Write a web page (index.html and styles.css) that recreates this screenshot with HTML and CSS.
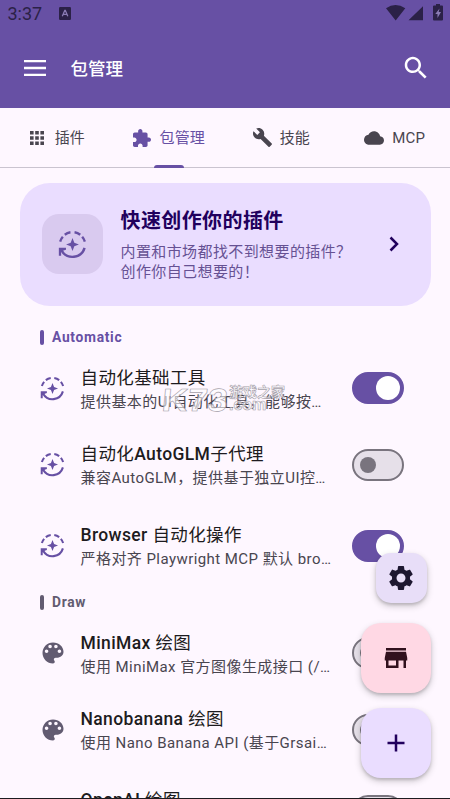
FILE: index.html
```html
<!DOCTYPE html>
<html lang="zh-CN">
<head>
<meta charset="utf-8">
<title>包管理</title>
<link rel="stylesheet" href="styles.css">
</head>
<body>
<svg class="defs" width="0" height="0">
  <symbol id="auto" viewBox="0 0 24 24">
    <g fill="none" stroke="currentColor" stroke-width="2">
      <path d="M1.800 9.600A10.300 10.300 0 0 1 4 5.600M5.600 3.900A10.300 10.300 0 0 1 10.300 1.900M13.700 1.900A10.300 10.300 0 0 1 18.400 3.900M20 5.600A10.300 10.300 0 0 1 22.200 9.600"/>
      <path d="M22 14.800A10.400 10.400 0 0 1 3 17"/>
    </g>
    <path fill="currentColor" d="M.7 14.600H6.600V16.400L4.600 17 2.600 18.500V21.300H.7zM12 6.700l1.500 3.800 3.800 1.500-3.800 1.500-1.500 3.800-1.500-3.800-3.800-1.500 3.800-1.500z"/>
  </symbol>
  <symbol id="palette" viewBox="0 0 24 24"><path fill="currentColor" d="M12 3c-4.970 0-9 4.030-9 9s4.030 9 9 9c.83 0 1.500-.67 1.500-1.500 0-.39-.15-.74-.39-1.010-.23-.26-.38-.61-.38-.99 0-.83.67-1.500 1.500-1.500H16c2.760 0 5-2.240 5-5 0-4.420-4.030-8-9-8zm-5.500 9c-.83 0-1.500-.67-1.500-1.500S5.670 9 6.500 9 8 9.670 8 10.500 7.330 12 6.500 12zm3-4C8.670 8 8 7.330 8 6.500S8.670 5 9.500 5s1.500.67 1.500 1.500S10.330 8 9.500 8zm5 0c-.83 0-1.500-.67-1.500-1.500S13.670 5 14.500 5s1.500.67 1.500 1.500S15.330 8 14.500 8zm3 4c-.83 0-1.500-.67-1.500-1.500S16.670 9 17.500 9s1.500.67 1.500 1.500-.67 1.500-1.500 1.500z"/></symbol>
</svg>
<div class="screen">
  <header class="top">
    <div class="status">
      <span class="clock">3:37</span>
      <svg class="badge" viewBox="0 0 12 13"><rect width="12" height="13" rx="1.200" fill="#2b2147"/><path d="M3.300 9.200 5.800 3.300h.5l2.500 5.900M4.300 7.300h3.500" fill="none" stroke="#8a7bb4" stroke-width="1.300"/></svg>
      <svg class="sys" viewBox="0 0 60 18" fill="#2b2147"><path d="M0 4.300Q9.500-2.200 19.300 4.300L9.700 16.500zM22.500 16.300 37 2.300V16.300zM48 1.500h2V0h4v1.500h2q1 0 1 1V15.500q0 1-1 1H48q-1 0-1-1V2.500q0-1 1-1z"/><path fill="#8a7bb4" d="M53.500 4.500 49.300 10h2.200v4l3.500-6h-2.300z"/></svg>
    </div>
    <div class="bar">
      <svg class="menu" viewBox="0 0 22 16"><path d="M0 1.200h22M0 8h22M0 14.800h22" stroke="#fff" stroke-width="2.300"/></svg>
      <h1>包管理</h1>
      <svg class="search" viewBox="0 0 24 24"><path fill="#fff" d="M15.500 14h-.79l-.28-.27C15.410 12.590 16 11.110 16 9.500 16 5.910 13.090 3 9.500 3S3 5.910 3 9.500 5.910 16 9.500 16c1.610 0 3.090-.59 4.230-1.570l.27.28v.79l5 4.990L20.490 19l-4.990-5zm-6 0C7.010 14 5 11.990 5 9.500S7.010 5 9.500 5 14 7.010 14 9.500 11.990 14 9.500 14z"/></svg>
    </div>
  </header>
  <nav class="tabs">
    <div class="tab t1"><svg viewBox="0 0 14 14"><path d="M0 0h3.600v3.600H0zM5.200 0h3.600v3.600H5.200zM10.400 0H14v3.600h-3.600zM0 5.200h3.600v3.600H0zM5.200 5.200h3.600v3.600H5.200zM10.400 5.200H14v3.600h-3.600zM0 10.400h3.600V14H0zM5.200 10.400h3.600V14H5.200zM10.400 10.400H14V14h-3.600z"/></svg><span>插件</span></div>
    <div class="tab t2"><svg viewBox="2 1 21 21"><path d="M20.500 11H19V7c0-1.100-.9-2-2-2h-4V3.500C13 2.120 11.880 1 10.500 1S8 2.120 8 3.500V5H4c-1.100 0-1.990.9-1.990 2v3.800H3.500c1.490 0 2.700 1.210 2.700 2.700s-1.210 2.700-2.700 2.700H2V20c0 1.100.9 2 2 2h3.800v-1.500c0-1.490 1.210-2.700 2.700-2.700 1.490 0 2.700 1.210 2.700 2.700V22H17c1.100 0 2-.9 2-2v-4h1.500c1.380 0 2.500-1.120 2.500-2.500S21.880 11 20.500 11z"/></svg><span>包管理</span></div>
    <div class="tab t3"><svg viewBox="1 1 22 22"><path d="M22.700 19l-9.100-9.100c.9-2.300.4-5-1.500-6.900-2-2-5-2.400-7.400-1.300L9 6 6 9 1.600 4.700C.4 7.100.9 10.100 2.900 12.100c1.900 1.900 4.600 2.400 6.900 1.500l9.100 9.100c.4.4 1 .4 1.400 0l2.300-2.300c.5-.4.5-1.100.1-1.400z"/></svg><span>技能</span></div>
    <div class="tab t4"><svg viewBox="0 4 24 16"><path d="M19.350 10.040C18.670 6.590 15.640 4 12 4 9.110 4 6.600 5.640 5.350 8.040 2.340 8.360 0 10.910 0 14c0 3.310 2.690 6 6 6h13c2.760 0 5-2.240 5-5 0-2.640-2.050-4.780-4.650-4.960z"/></svg><span>MCP</span></div>
  </nav>
  <main>
    <section class="promo">
      <div class="tile"><svg><use href="#auto"/></svg></div>
      <div class="copy"><h2>快速创作你的插件</h2><p>内置和市场都找不到想要的插件？<br>创作你自己想要的！</p></div>
      <svg class="chev" viewBox="0 0 10 16"><path d="M1.500 1.500 8 8l-6.500 6.500" fill="none" stroke="#21005d" stroke-width="2.500"/></svg>
    </section>
    <h3 class="group">Automatic</h3>
    <article class="row">
      <svg class="ico"><use href="#auto"/></svg>
      <div class="txt"><h4>自动化基础工具</h4><p>提供基本的UI自动化工具，能够按…</p></div>
      <i class="switch on"></i>
      <div class="mark"><b>K73</b><div><span>游戏之家</span><em>.com</em></div></div>
    </article>
    <article class="row">
      <svg class="ico"><use href="#auto"/></svg>
      <div class="txt"><h4>自动化<b>AutoGLM</b>子代理</h4><p>兼容AutoGLM，提供基于独立UI控…</p></div>
      <i class="switch"></i>
    </article>
    <article class="row tall">
      <svg class="ico"><use href="#auto"/></svg>
      <div class="txt"><h4><b>Browser</b> 自动化操作</h4><p>严格对齐 Playwright MCP 默认 bro…</p></div>
      <i class="switch on"></i>
    </article>
    <h3 class="group draw">Draw</h3>
    <article class="row grey">
      <svg class="ico"><use href="#palette"/></svg>
      <div class="txt"><h4><b>MiniMax</b> 绘图</h4><p>使用 MiniMax 官方图像生成接口 (/…</p></div>
      <i class="switch"></i>
    </article>
    <article class="row grey">
      <svg class="ico"><use href="#palette"/></svg>
      <div class="txt"><h4><b>Nanobanana</b> 绘图</h4><p>使用 Nano Banana API (基于Grsai…</p></div>
      <i class="switch"></i>
    </article>
    <article class="row grey tall last">
      <svg class="ico"><use href="#palette"/></svg>
      <div class="txt"><h4><b>OpenAI</b> 绘图</h4></div>
      <i class="switch"></i>
    </article>
  </main>
  <div class="fabs">
    <div class="fab small"><svg width="30" height="30" viewBox="0 0 24 24"><path fill="#1d1730" d="M19.140 12.940c.04-.3.060-.61.060-.94 0-.32-.02-.64-.07-.94l2.030-1.580c.18-.14.23-.41.120-.61l-1.920-3.320c-.12-.22-.37-.29-.59-.22l-2.390.96c-.5-.38-1.030-.7-1.620-.94l-.36-2.540c-.04-.24-.24-.41-.48-.41h-3.840c-.24 0-.43.17-.47.41l-.36 2.540c-.59.24-1.130.57-1.620.94l-2.390-.96c-.22-.08-.47 0-.59.22L2.740 8.870c-.12.21-.08.470.120.610l2.030 1.580c-.05.3-.09.63-.09.940s.02.640.070.940l-2.030 1.580c-.18.140-.23.410-.12.610l1.920 3.320c.12.220.370.290.590.220l2.390-.96c.5.380 1.030.7 1.620.940l.36 2.540c.05.240.240.410.480.410h3.840c.24 0 .440-.17.470-.41l.36-2.540c.59-.24 1.130-.56 1.620-.94l2.390.96c.22.080.470 0 .590-.22l1.920-3.320c.12-.22.070-.47-.12-.61l-2.010-1.580zM12 15.600c-1.980 0-3.600-1.620-3.600-3.600s1.620-3.600 3.600-3.600 3.600 1.620 3.600 3.600-1.620 3.600-3.600 3.600z"/></svg></div>
    <div class="fab pink"><svg width="30" height="30" viewBox="0 0 24 24"><path fill="#31111d" d="M20 4H4v2h16V4zm1 10v-2l-1-5H4l-1 5v2h1v6h10v-6h4v6h2v-6h1zm-9 4H6v-4h6v4z"/></svg></div>
    <div class="fab"><svg width="18" height="18" viewBox="0 0 18 18"><path d="M9 .5v17M.5 9h17" stroke="#21005d" stroke-width="2.500"/></svg></div>
  </div>
</div>
</body>
</html>
```
FILE: styles.css
```css
* { box-sizing: border-box; margin: 0; padding: 0; }
body { background: #fef7ff; font-family: Roboto, "Noto Sans CJK SC", sans-serif; color: #1d1b20; }
svg { display: block; flex: none; }
.defs { position: absolute; }
.screen { position: relative; width: 450px; height: 799px; overflow: hidden; border-bottom: 1px solid #1d1b20; display: flex; flex-direction: column; }
.top { height: 108px; background: #6750a4; flex: none; }
.status { height: 28px; display: flex; align-items: flex-start; padding: 4px 7px 0 7.500px; }
.clock { font-size: 18px; line-height: 20px; color: #2b2147; width: 51px; }
.badge { width: 12px; height: 13px; margin-top: 3px; }
.sys { width: 60px; height: 18px; margin-left: auto; margin-right: -3px; }
.bar { height: 80px; display: flex; align-items: center; padding: 0 19.500px 0 24px; }
.menu { width: 22px; height: 16px; }
h1 { font-size: 17.500px; font-weight: 500; color: #fff; margin-left: 24.500px; line-height: 24px; position: relative; top: 1px; }
.search { width: 30px; height: 30px; margin-left: auto; }
.tabs { height: 60px; flex: none; display: grid; grid-template-columns: repeat(4, 1fr); border-bottom: 1px solid #cac4d0; }
.tab { display: flex; align-items: center; justify-content: center; font-size: 15px; color: #49454f; position: relative; letter-spacing: .1px; }
.tab svg { fill: currentColor; }
.tab span { line-height: 20px; padding-top: 1px; }
.t1 { padding-left: 2px; }
.t1 svg { width: 14px; height: 14px; margin-right: 11px; }
.t2 svg { width: 18px; height: 18px; margin-right: 9px; }
.t3 svg { width: 19px; height: 19px; margin-right: 8px; }
.t4 svg { width: 20px; height: 14px; margin-right: 8px; }
.t4 { letter-spacing: .2px; padding-left: 2px; }
.t4 span { padding-top: 0; }
.t2 { color: #6750a4; }
.t2::after { content: ""; position: absolute; bottom: -1px; left: 41.500px; width: 30px; height: 3px; border-radius: 3px 3px 0 0; background: #6750a4; }
main { flex: 1; min-height: 0; overflow: hidden; padding: 15px 19px 0 20px; }
.promo { height: 123px; border-radius: 30px; background: #eaddff; display: flex; align-items: center; padding: 0 32px 1px 22px; }
.tile { width: 61px; height: 60px; border-radius: 17px; background: #d9caef; display: grid; place-items: center; color: #6750a4; }
.tile svg { width: 29px; height: 29px; }
.copy { margin-left: 17.500px; flex: 1; padding-top: 1px; }
h2 { font-size: 20px; font-weight: 700; line-height: 28px; letter-spacing: .4px; color: #21005d; }
.copy p { font-size: 15px; line-height: 20px; letter-spacing: .4px; color: #665193; margin-top: 7px; white-space: nowrap; }
.chev { width: 10px; height: 16px; }
.group { display: flex; align-items: center; height: 20px; margin: 21px 0 0 20px; font-size: 13.800px; font-weight: 700; letter-spacing: .7px; color: #6750a4; }
.group::before { content: ""; width: 4px; height: 15px; border-radius: 2px; background: currentColor; margin-right: 8px; }
.draw { color: #625b71; margin-top: 4px; }
.row { height: 76.500px; display: flex; align-items: center; padding: 0 27px 0 20px; position: relative; color: #6750a4; }
.group + .row { margin-top: 3px; }
.tall { height: 85px; }
.grey { color: #625b71; }
.ico { width: 25px; height: 25px; }
.grey .ico { width: 28px; height: 28px; margin: 0 -2px 0 -1px; }
.txt { margin-left: 15.500px; flex: 1; min-width: 0; white-space: nowrap; padding-top: 3px; }
.last .txt { padding-bottom: 25px; }
h4 { font-size: 17.500px; line-height: 24px; font-weight: 400; letter-spacing: .38px; color: #1d1b20; }
h4 b { font-weight: 500; }
.txt p { font-size: 15px; line-height: 24px; letter-spacing: .44px; color: #49454f; }
.switch { width: 52px; height: 32px; border-radius: 16px; border: 2px solid #79747e; background: #e6e0e9; flex: none; display: flex; align-items: center; padding: 0 6px; }
.switch::before { content: ""; width: 16px; height: 16px; border-radius: 50%; background: #79747e; }
.switch.on { background: #6750a4; border-color: #6750a4; justify-content: flex-end; padding: 0 2px; }
.switch.on::before { width: 24px; height: 24px; background: #fff; }
.mark { position: absolute; left: 142px; top: 35px; display: flex; color: #fff9; -webkit-text-stroke: .6px #a5a0a9; }
.mark b { font: 700 32px/30px "Liberation Sans", sans-serif; width: 67px; transform: scaleX(1.120) skewX(-5deg); transform-origin: left; }
.mark span { display: block; font-size: 14px; line-height: 14px; font-weight: 700; }
.mark em { display: block; font: 700 16px/12px "Liberation Sans", sans-serif; }
.fabs { position: absolute; right: 19px; top: 553px; display: flex; flex-direction: column; align-items: flex-end; }
.fab { width: 70px; height: 70px; border-radius: 20px; background: #eaddff; display: grid; place-items: center; box-shadow: 0 3px 7px #0003, 0 2px 3px #0002; }
.fab.small { width: 51px; height: 50px; border-radius: 15px; background: #e8def8; margin: 0 4px 20px 0; padding-right: 1px; }
.fab.pink { background: #ffd8e4; margin-bottom: 15px; }
```
